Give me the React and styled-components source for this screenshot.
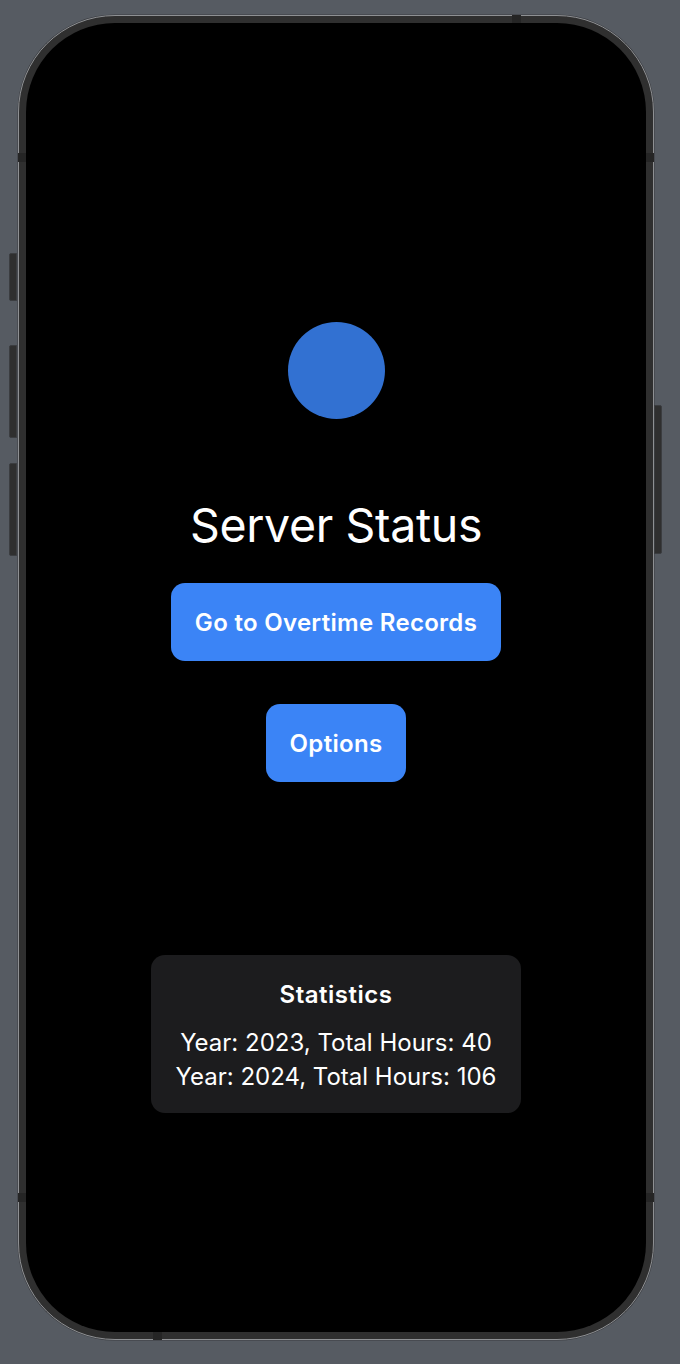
import React from "react";
import styled, { createGlobalStyle } from "styled-components";

const GlobalStyle = createGlobalStyle`
  html, body {
    margin: 0;
    padding: 0;
    background: #565b62;
  }
  body {
    font-family: Inter, "Noto Sans", "Liberation Sans", sans-serif;
    -webkit-font-smoothing: antialiased;
  }
`;

const Page = styled.div`
  width: 680px;
  height: 1364px;
  box-sizing: border-box;
  padding: 15px 0 0 18px;
  background: #565b62;
  overflow: hidden;
`;

const Phone = styled.div`
  position: relative;
  width: 636px;
  height: 1325px;
  box-sizing: border-box;
  border: 1.5px solid #8e9093;
  border-radius: 97px;
  background: #2f2f2f;
  padding: 7px;
  box-shadow: 0 0 0 0.5px #3a3c40;
`;

const SideButton = styled.div`
  position: absolute;
  top: ${(p) => p.$top}px;
  height: ${(p) => p.$h}px;
  width: 8px;
  ${(p) => (p.$right ? "right: -9px;" : "left: -10px;")}
  background: #2f2f2f;
  border: 1px solid #3b3d40;
  border-radius: ${(p) => (p.$right ? "0 2px 2px 0" : "2px 0 0 2px")};
  box-sizing: border-box;
`;

const Band = styled.div`
  position: absolute;
  background: #252525;
  ${(p) => p.$pos}
`;

const Screen = styled.main`
  height: 100%;
  background: #000;
  border-radius: 89px;
  display: flex;
  flex-direction: column;
  align-items: center;
  padding-top: 299px;
  box-sizing: border-box;
  color: #fff;
`;

const Dot = styled.div`
  width: 97px;
  height: 97px;
  border-radius: 50%;
  background: #3271d2;
`;

const Title = styled.h1`
  margin: 77px 0 0;
  font-size: 46.5px;
  line-height: 58px;
  font-weight: 400;
  letter-spacing: -0.35px;
`;

const ActionButton = styled.button`
  margin-top: ${(p) => p.$gap}px;
  height: 78px;
  padding: 0 24px;
  border: none;
  border-radius: 14px;
  background: #3b84f6;
  color: #fff;
  font-family: inherit;
  font-size: 24px;
  font-weight: 600;
  letter-spacing: 0.3px;
  cursor: pointer;
`;

const StatsCard = styled.section`
  margin-top: 173px;
  width: 370px;
  box-sizing: border-box;
  padding: 25px 0 19px;
  background: #1c1c1e;
  border-radius: 14px;
  display: flex;
  flex-direction: column;
  align-items: center;
`;

const StatsTitle = styled.h2`
  margin: 0 0 17px;
  font-size: 24px;
  line-height: 29px;
  font-weight: 600;
  letter-spacing: 0.5px;
`;

const StatLine = styled.div`
  font-size: 24px;
  line-height: 34px;
  font-weight: 400;
  letter-spacing: 0;
`;

const stats = [
  { year: 2023, hours: 40 },
  { year: 2024, hours: 106 },
];

const App = () => {
  return (
    <Page>
      <GlobalStyle />
      <Phone>
        <SideButton $top={237} $h={48} />
        <SideButton $top={329} $h={93} />
        <SideButton $top={447} $h={93} />
        <SideButton $right $top={389} $h={149} />

        <Band $pos="left: -1px; top: 137px; width: 8px; height: 9px;" />
        <Band $pos="right: -1px; top: 137px; width: 8px; height: 9px;" />
        <Band $pos="left: -1px; top: 1177px; width: 8px; height: 9px;" />
        <Band $pos="right: -1px; top: 1177px; width: 8px; height: 9px;" />
        <Band $pos="top: -1px; left: 493px; width: 9px; height: 8px;" />
        <Band $pos="bottom: -1px; left: 134px; width: 9px; height: 8px;" />

        <Screen>
          <Dot />
          <Title>Server Status</Title>
          <ActionButton $gap={29}>Go to Overtime Records</ActionButton>
          <ActionButton $gap={43}>Options</ActionButton>

          <StatsCard>
            <StatsTitle>Statistics</StatsTitle>
            {stats.map((s) => (
              <StatLine key={s.year}>
                Year: {s.year}, Total Hours: {s.hours}
              </StatLine>
            ))}
          </StatsCard>
        </Screen>
      </Phone>
    </Page>
  );
};

export default App;
